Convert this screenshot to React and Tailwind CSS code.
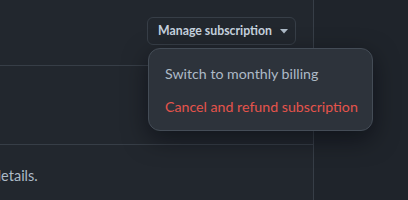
import React from "react";

export default function App() {
  return (
    <div
      className="relative flex h-[200px] w-[408px] overflow-hidden bg-[#1f242b] text-[#adbac7]"
      style={{ fontFamily: 'Lato, "Open Sans", sans-serif' }}
    >
      <div className="flex w-[314px] shrink-0 flex-col border-r border-[#373e47] bg-[#22272e]">
        <div className="flex h-[66px] shrink-0 justify-end border-b border-[#373e47] pr-[17px] pt-[17px]">
          <button className="flex h-[28px] w-[149px] items-center gap-[8px] rounded-[6px] border border-[#373e47] bg-[#22272e] pl-[10px] text-[12.3px] font-bold text-[#c5d1de]">
            <span>Manage subscription</span>
            <svg width="8" height="5" viewBox="0 0 8 5" className="mt-[1px]">
              <path d="M0 0 L8 0 L4 4.5 Z" fill="#adbac7" />
            </svg>
          </button>
        </div>
        <div className="h-[79px] shrink-0 border-b border-[#373e47]" />
        <div className="whitespace-nowrap pt-[20px] text-[14.5px] text-[#adbac7]">
          <span className="ml-[-7px]">details.</span>
        </div>
      </div>
      <div className="flex-1" />

      <div className="absolute left-[148px] top-[48px] w-[225px] rounded-[12px] border border-[#444c56] bg-[#2d333b] pb-[12px] pt-[14px] shadow-[0_8px_24px_rgba(1,4,9,0.5)]">
        <div className="whitespace-nowrap px-[16px] text-[14.2px] leading-[22px] text-[#adbac7]">
          Switch to monthly billing
        </div>
        <div className="mt-[11px] whitespace-nowrap px-[16px] text-[14.2px] leading-[22px] text-[#e5534b]">
          Cancel and refund subscription
        </div>
      </div>
    </div>
  );
}
